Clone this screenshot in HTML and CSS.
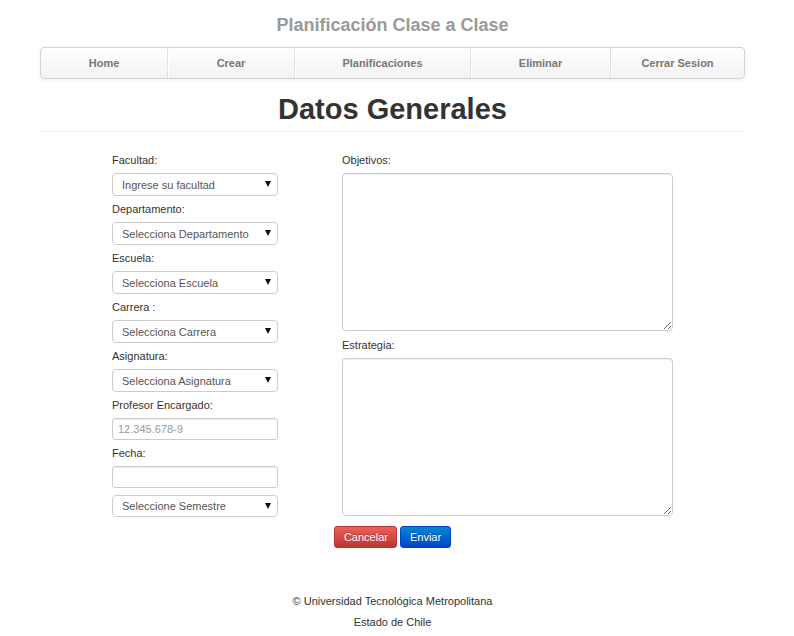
FILE: index.html
```html
<!DOCTYPE html>
<html lang="es">
<head>
<meta charset="utf-8">
<title>Planificación Clase a Clase</title>
<link rel="stylesheet" href="styles.css">
</head>
<body>
<div class="page">
  <h3 class="site-title">Planificación Clase a Clase</h3>
  <nav class="navbar">
    <a class="nav-item nav-home" href="#">Home</a>
    <a class="nav-item nav-crear" href="#">Crear</a>
    <a class="nav-item nav-plan" href="#">Planificaciones</a>
    <a class="nav-item nav-elim" href="#">Eliminar</a>
    <a class="nav-item nav-cerrar" href="#">Cerrar Sesion</a>
  </nav>
  <h1 class="page-title">Datos Generales</h1>
  <hr class="divider">
  <form class="form">
    <div class="columns">
      <div class="col-left">
        <label class="lbl">Facultad:</label>
        <div class="select-wrap"><select class="sel"><option>Ingrese su facultad</option></select></div>
        <label class="lbl">Departamento:</label>
        <div class="select-wrap"><select class="sel"><option>Selecciona Departamento</option></select></div>
        <label class="lbl">Escuela:</label>
        <div class="select-wrap"><select class="sel"><option>Selecciona Escuela</option></select></div>
        <label class="lbl">Carrera :</label>
        <div class="select-wrap"><select class="sel"><option>Selecciona Carrera</option></select></div>
        <label class="lbl">Asignatura:</label>
        <div class="select-wrap"><select class="sel"><option>Selecciona Asignatura</option></select></div>
        <label class="lbl">Profesor Encargado:</label>
        <input class="txt" type="text" placeholder="12.345.678-9">
        <label class="lbl">Fecha:</label>
        <input class="txt" type="text">
        <div class="select-wrap sem"><select class="sel"><option>Seleccione Semestre</option></select></div>
      </div>
      <div class="col-right">
        <label class="lbl">Objetivos:</label>
        <textarea class="area"></textarea>
        <label class="lbl lbl-area">Estrategia:</label>
        <textarea class="area"></textarea>
      </div>
    </div>
    <div class="actions">
      <button type="button" class="btn btn-danger">Cancelar</button>
      <button type="button" class="btn btn-primary">Enviar</button>
    </div>
  </form>
  <footer class="footer">
    <p>© Universidad Tecnológica Metropolitana</p>
    <p>Estado de Chile</p>
  </footer>
</div>
</body>
</html>
```
FILE: styles.css
```css
html, body {
  margin: 0;
  padding: 0;
  background: #fff;
}
body {
  font-family: "Liberation Sans", Arial, sans-serif;
  font-size: 11px;
  color: #333;
}
.page {
  width: 705px;
  margin: 0 40px;
}
.site-title {
  margin: 0;
  padding-top: 15px;
  line-height: 20px;
  font-size: 18px;
  font-weight: bold;
  color: #999;
  text-align: center;
}
.navbar {
  margin-top: 12px;
  display: flex;
  height: 30px;
  border: 1px solid #d4d4d4;
  border-radius: 4px;
  background: linear-gradient(#ffffff, #f2f2f2);
  box-shadow: 0 1px 4px rgba(0,0,0,0.065);
}
.nav-item {
  box-sizing: border-box;
  display: flex;
  align-items: center;
  justify-content: center;
  font-weight: bold;
  font-size: 11px;
  color: #777;
  text-decoration: none;
  border-left: 1px solid #e2e2e2;
  box-shadow: inset 1px 0 0 #fff;
}
.nav-home { width: 126px; border-left: none; box-shadow: none; }
.nav-crear { width: 127px; }
.nav-plan { width: 176px; }
.nav-elim { width: 140px; }
.nav-cerrar { flex: 1; }
.page-title {
  margin: 10px 0 0;
  line-height: 40px;
  font-size: 29px;
  font-weight: bold;
  color: #333;
  text-align: center;
}
.divider {
  margin: 2px 0 0;
  border: 0;
  border-top: 1px solid #eee;
}
.form {
  margin-top: 19px;
}
.columns {
  display: flex;
}
.col-left {
  margin-left: 72px;
  width: 166px;
  display: flex;
  flex-direction: column;
}
.col-right {
  margin-left: 64px;
  width: 331px;
  display: flex;
  flex-direction: column;
}
.lbl {
  display: block;
  line-height: 18px;
  margin-bottom: 4px;
  color: #333;
}
.select-wrap {
  position: relative;
  margin-bottom: 4px;
}
.select-wrap::after {
  content: "";
  position: absolute;
  right: 7px;
  top: 8px;
  width: 0;
  height: 0;
  border-left: 3px solid transparent;
  border-right: 3px solid transparent;
  border-top: 6px solid #111;
  pointer-events: none;
}
.select-wrap.sem {
  margin-top: 3px;
  margin-bottom: 0;
}
.select-wrap.sem .sel {
  height: 22px;
}
.sel {
  -webkit-appearance: none;
  appearance: none;
  display: block;
  box-sizing: border-box;
  width: 166px;
  height: 23px;
  margin: 0;
  padding: 0 20px 0 9px;
  border: 1px solid #ccc;
  border-radius: 4px;
  background: #fff;
  font-family: "Liberation Sans", Arial, sans-serif;
  font-size: 11px;
  color: #555;
}
.txt {
  display: block;
  box-sizing: border-box;
  width: 166px;
  height: 22px;
  margin: 0 0 4px;
  padding: 0 5px;
  border: 1px solid #ccc;
  border-radius: 3px;
  background: #fff;
  font-family: "Liberation Sans", Arial, sans-serif;
  font-size: 11px;
  color: #555;
  box-shadow: inset 0 1px 1px rgba(0,0,0,0.075);
}
.txt::placeholder {
  color: #999;
}
.area {
  display: block;
  box-sizing: border-box;
  width: 331px;
  height: 158px;
  margin: 0;
  border: 1px solid #ccc;
  border-radius: 4px;
  background: #fff;
  box-shadow: inset 0 1px 1px rgba(0,0,0,0.075);
  font-family: "Liberation Sans", Arial, sans-serif;
  font-size: 11px;
}
.lbl-area {
  margin-top: 5px;
}
.actions {
  margin-top: 9px;
  display: flex;
  justify-content: center;
  gap: 3px;
}
.btn {
  box-sizing: border-box;
  height: 22px;
  padding: 0 8.5px;
  border-radius: 3px;
  font-family: "Liberation Sans", Arial, sans-serif;
  font-size: 11px;
  color: #fff;
  text-shadow: 0 -1px 0 rgba(0,0,0,0.25);
  cursor: pointer;
}
.btn-danger {
  border: 1px solid #b7352f;
  background: linear-gradient(#ee5f5b, #bd362f);
}
.btn-primary {
  border: 1px solid #0046c4;
  background: linear-gradient(#0088cc, #0044cc);
}
.footer {
  margin-top: 43px;
  text-align: center;
  color: #333;
}
.footer p {
  margin: 0;
  line-height: 21px;
}
```
